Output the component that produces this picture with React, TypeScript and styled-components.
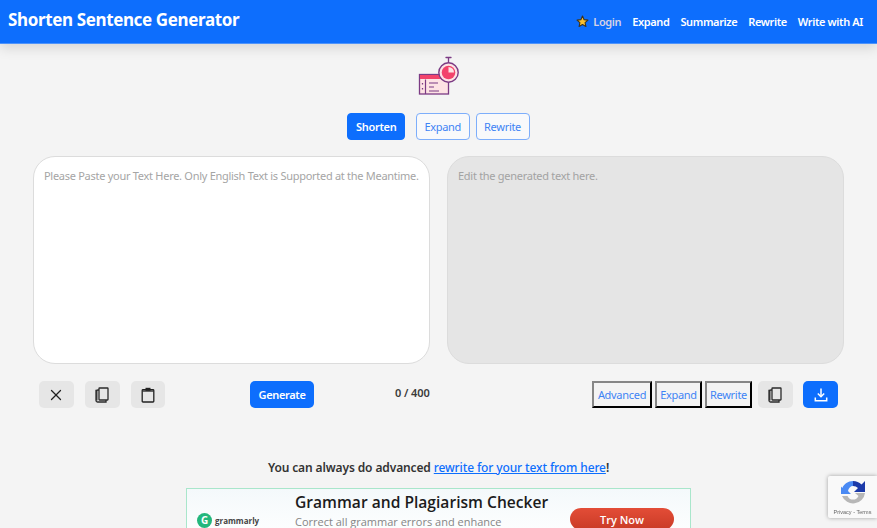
import React from "react";
import styled, { createGlobalStyle } from "styled-components";
import { X } from "lucide-react";

const GlobalStyle = createGlobalStyle`
  html, body {
    margin: 0;
    height: 528px;
    overflow: hidden;
    background: #f4f4f4;
    font-family: "Noto Sans", "Open Sans", sans-serif;
  }
  * { box-sizing: border-box; }
`;

const Navbar = styled.header`
  height: 44px;
  background: #0d6efd;
  border-bottom: 1px solid #4d93fb;
  box-shadow: 0 4px 12px rgba(0, 0, 0, 0.13);
  display: flex;
  align-items: center;
  justify-content: space-between;
  padding: 0 14px 0 8px;
`;

const Brand = styled.div`
  color: #fff;
  font-size: 17px;
  font-weight: 700;
  letter-spacing: -0.37px;
  margin-top: -4px;
`;

const NavLinks = styled.nav`
  display: flex;
  align-items: center;
  gap: 11px;
`;

const NavLink = styled.span<{ $muted?: boolean }>`
  color: ${(p) => (p.$muted ? "#d5d3e6" : "#fff")};
  font-size: 11px;
  font-weight: 600;
  letter-spacing: -0.38px;
`;

const LoginGroup = styled.span`
  display: flex;
  align-items: center;
  gap: 4px;
`;

const Main = styled.main`
  display: flex;
  flex-direction: column;
  align-items: center;
`;

const Logo = styled.svg`
  width: 42px;
  height: 42px;
  margin-top: 11px;
`;

const Tabs = styled.div`
  display: flex;
  gap: 6px;
  margin-top: 16px;
`;

const Tab = styled.button<{ $active?: boolean }>`
  height: 27px;
  padding: 0 7.5px;
  border-radius: 4px;
  font-family: inherit;
  font-size: 11px;
  letter-spacing: -0.3px;
  font-weight: ${(p) => (p.$active ? 600 : 400)};
  color: ${(p) => (p.$active ? "#fff" : "#3f84f5")};
  background: ${(p) => (p.$active ? "#0d6efd" : "#f8f9fb")};
  border: 1px solid ${(p) => (p.$active ? "#0d6efd" : "#7daefb")};
  margin-right: ${(p) => (p.$active ? "5px" : "0")};
`;

const Editors = styled.section`
  width: 811px;
  margin-top: 16px;
  display: grid;
  grid-template-columns: 397px 397px;
  column-gap: 17px;
`;

const Editor = styled.div<{ $readonly?: boolean }>`
  height: 208px;
  border-radius: 22px;
  border: 1px solid #dcdcdc;
  background: ${(p) => (p.$readonly ? "#e5e5e5" : "#fff")};
  color: ${(p) => (p.$readonly ? "#a3a3a3" : "#a5a5a5")};
  font-size: 11px;
  letter-spacing: -0.28px;
  padding: 11px 10px;
  line-height: 15px;
  white-space: nowrap;
`;

const Toolbar = styled.div`
  width: 811px;
  margin-top: 17px;
  height: 27px;
  display: grid;
  grid-template-columns: 1fr auto;
  padding: 0 6px;
`;

const LeftTools = styled.div`
  display: flex;
  align-items: center;
`;

const RightTools = styled.div`
  display: flex;
  align-items: center;
  gap: 3px;
`;

const IconButton = styled.button<{ $gap?: number; $lead?: number }>`
  width: 34.5px;
  height: 27px;
  border: 0;
  border-radius: 5px;
  background: #e6e6e6;
  color: #222;
  display: flex;
  align-items: center;
  justify-content: center;
  padding: 0;
  margin-left: ${(p) => p.$lead ?? 0}px;
  margin-right: ${(p) => p.$gap ?? 0}px;
`;

const PrimaryButton = styled.button<{ $wide?: boolean }>`
  height: 27px;
  width: ${(p) => (p.$wide ? "64px" : "35px")};
  border: 0;
  border-radius: 5px;
  background: #0d6efd;
  color: #fff;
  font-family: inherit;
  font-size: 11px;
  letter-spacing: -0.35px;
  font-weight: 600;
  display: flex;
  align-items: center;
  justify-content: center;
  padding: 0;
`;

const Counter = styled.span`
  font-size: 11px;
  letter-spacing: -0.1px;
  font-weight: 600;
  color: #3a3a3a;
  margin: -5px 0 0 81px;
`;

const OutlineButton = styled.button<{ $width: number }>`
  height: 27px;
  width: ${(p) => p.$width}px;
  padding: 0;
  font-family: inherit;
  font-size: 11px;
  letter-spacing: -0.3px;
  color: #3f84f5;
  background: #f4f4f4;
  border: 2px outset #333;
`;

const Note = styled.p`
  margin: 51px 0 0;
  font-size: 12px;
  font-weight: 600;
  letter-spacing: -0.12px;
  line-height: 17px;
  color: #333;
`;

const NoteLink = styled.a`
  color: #0d6efd;
  font-weight: 500;
  text-decoration: underline;
`;

const AdBanner = styled.aside`
  width: 505px;
  height: 90px;
  margin-top: 12px;
  border: 1px solid #a9e6cb;
  background: linear-gradient(#f4f9fb, #ffffff 60%);
  display: grid;
  grid-template-columns: 108px 275px 1fr;
  font-family: "Open Sans", sans-serif;
`;

const AdBrand = styled.div`
  display: flex;
  align-items: flex-start;
  gap: 3px;
  padding: 24px 0 0 10px;
  font-size: 8px;
  line-height: 15px;
  font-weight: 700;
  color: #444;
`;

const AdBadge = styled.span`
  width: 15px;
  height: 15px;
  border-radius: 50%;
  background: #23b77c;
  color: #fff;
  font-size: 10px;
  line-height: 15px;
  text-align: center;
  flex: none;
`;

const AdCopy = styled.div`
  padding-left: 0;
`;

const AdTitle = styled.div`
  font-size: 15.6px;
  font-weight: 600;
  line-height: 20px;
  margin-top: 3px;
  color: #1c1c1c;
  white-space: nowrap;
`;

const AdText = styled.div`
  font-size: 11px;
  line-height: 12px;
  margin-top: 4px;
  color: #858585;
  white-space: nowrap;
`;

const AdAccent = styled.span`
  display: block;
  padding-left: 2px;
  color: #d9402a;
`;

const AdAction = styled.button`
  width: 104px;
  height: 22px;
  margin-top: 19px;
  border: 0;
  border-radius: 11px;
  background: linear-gradient(#e34d37, #c93a26);
  color: #fff;
  font-family: inherit;
  font-size: 11px;
  font-weight: 600;
  padding: 0;
`;

const RecaptchaBadge = styled.div`
  position: fixed;
  right: 0;
  bottom: 10px;
  width: 49px;
  height: 42px;
  background: #f9f9f9;
  box-shadow: 0 0 4px rgba(0, 0, 0, 0.35);
  border-radius: 2px 0 0 2px;
  display: flex;
  flex-direction: column;
  align-items: center;
  padding-top: 5px;
`;

const RecaptchaTerms = styled.span`
  font-family: "Liberation Sans", sans-serif;
  font-size: 5.5px;
  line-height: 8px;
  margin-top: 3px;
  color: #666;
  white-space: nowrap;
`;

function StarIcon() {
  return (
    <svg width="13" height="13" viewBox="0 0 24 24">
      <path
        d="M12 2l3 6.6 7.1.8-5.3 4.8 1.5 7.1L12 17.7l-6.3 3.6 1.5-7.1L1.900 9.400 9 8.600z"
        fill="#fbc02d"
        stroke="#3b3320"
        strokeWidth="2"
        strokeLinejoin="round"
      />
    </svg>
  );
}

function TimerLogo() {
  return (
    <Logo viewBox="0 0 42 42">
      <path d="M30.500 3v5" stroke="#7b3b84" strokeWidth="1.300" />
      <path d="M28 2.500h5" stroke="#7b3b84" strokeWidth="1.300" strokeLinecap="round" />
      <rect x="1.500" y="19.500" width="29" height="19.500" fill="#fde3e4" stroke="#7b3b84" strokeWidth="1.300" />
      <rect x="2" y="20" width="28" height="4" fill="#f2436b" />
      <path d="M7.500 24.500V39" stroke="#7b3b84" strokeWidth="1.200" />
      <path d="M11 28h9M11 32h5M11 36h10" stroke="#7b3b84" strokeWidth="1.200" />
      <path d="M4.500 28v1.500M4.500 33v1.500" stroke="#7b3b84" strokeWidth="1.300" />
      <circle cx="30.500" cy="17.500" r="9.700" fill="#fde3e4" stroke="#7b3b84" strokeWidth="1.400" />
      <circle cx="30.500" cy="17.500" r="6.800" fill="#f2436b" />
      <path d="M30.500 17.500V12a5.500 5.500 0 0 1 5.500 5.500z" fill="#fde3e4" />
    </Logo>
  );
}

function CopyIcon() {
  return (
    <svg width="16" height="16" viewBox="0 0 16 16" fill="none" stroke="#2b2b2b" strokeWidth="1.300">
      <rect x="5" y="1" width="9" height="12" rx="0.500" />
      <path d="M5 3H3.800a1 1 0 0 0-1 1v9.500" />
      <path d="M3 3.500H2v10a1.500 1.500 0 0 0 1.500 1.500H12v-2" />
    </svg>
  );
}

function ClipboardIcon() {
  return (
    <svg width="16" height="16" viewBox="0 0 16 16" fill="none" stroke="#222" strokeWidth="1.300">
      <rect x="2.200" y="2.700" width="11.600" height="12.300" rx="0.800" />
      <path d="M2.500 4h11" />
      <rect x="5.500" y="0.800" width="5" height="3" fill="#222" stroke="none" />
    </svg>
  );
}

function DownloadIcon() {
  return (
    <svg width="16" height="16" viewBox="0 0 16 16" fill="none" stroke="#fff" strokeWidth="1.500">
      <path d="M8 1.500V9.500" />
      <path d="M4.800 6.500L8 9.700l3.200-3.200" />
      <path d="M2.300 10.500v3.200h11.400v-3.200" />
    </svg>
  );
}

function RecaptchaMark() {
  return (
    <svg width="24" height="24" viewBox="0 0 24 24">
      <path d="M12 0C7 0 3 3 1.300 7L0 5.500V13h10L7 10c.5-3 2.500-5 5-5z" fill="#4a8af4" />
      <path d="M12 0c3.400 0 6.300 1.400 8.500 3.600L24 0v11H13l4-4a7 7 0 0 0-5-2z" fill="#1c3aa9" />
      <path d="M1 15h5.500a6 6 0 0 0 11 0L14 12h10A12 12 0 0 1 1 15z" fill="#b7b7b7" />
    </svg>
  );
}

export default function App() {
  return (
    <>
      <GlobalStyle />
      <Navbar>
        <Brand>Shorten Sentence Generator</Brand>
        <NavLinks>
          <LoginGroup>
            <StarIcon />
            <NavLink $muted>Login</NavLink>
          </LoginGroup>
          <NavLink>Expand</NavLink>
          <NavLink>Summarize</NavLink>
          <NavLink>Rewrite</NavLink>
          <NavLink>Write with AI</NavLink>
        </NavLinks>
      </Navbar>
      <Main>
        <TimerLogo />
        <Tabs>
          <Tab $active>Shorten</Tab>
          <Tab>Expand</Tab>
          <Tab>Rewrite</Tab>
        </Tabs>
        <Editors>
          <Editor>Please Paste your Text Here. Only English Text is Supported at the Meantime.</Editor>
          <Editor $readonly>Edit the generated text here.</Editor>
        </Editors>
        <Toolbar>
          <LeftTools>
            <IconButton $gap={11.5}><X size={18} strokeWidth={1.700} /></IconButton>
            <IconButton $gap={11}><CopyIcon /></IconButton>
            <IconButton $gap={85}><ClipboardIcon /></IconButton>
            <PrimaryButton $wide>Generate</PrimaryButton>
            <Counter>0 / 400</Counter>
          </LeftTools>
          <RightTools>
            <OutlineButton $width={60}>Advanced</OutlineButton>
            <OutlineButton $width={47}>Expand</OutlineButton>
            <OutlineButton $width={47}>Rewrite</OutlineButton>
            <IconButton $lead={3} $gap={7.5}><CopyIcon /></IconButton>
            <PrimaryButton><DownloadIcon /></PrimaryButton>
          </RightTools>
        </Toolbar>
        <Note>
          You can always do advanced <NoteLink>rewrite for your text from here</NoteLink>!
        </Note>
        <AdBanner>
          <AdBrand>
            <AdBadge>G</AdBadge>
            grammarly
          </AdBrand>
          <AdCopy>
            <AdTitle>Grammar and Plagiarism Checker</AdTitle>
            <AdText>
              Correct all grammar errors and enhance
              <AdAccent>your</AdAccent>
            </AdText>
          </AdCopy>
          <AdAction>Try Now</AdAction>
        </AdBanner>
      </Main>
      <RecaptchaBadge>
        <RecaptchaMark />
        <RecaptchaTerms>Privacy - Terms</RecaptchaTerms>
      </RecaptchaBadge>
    </>
  );
}
